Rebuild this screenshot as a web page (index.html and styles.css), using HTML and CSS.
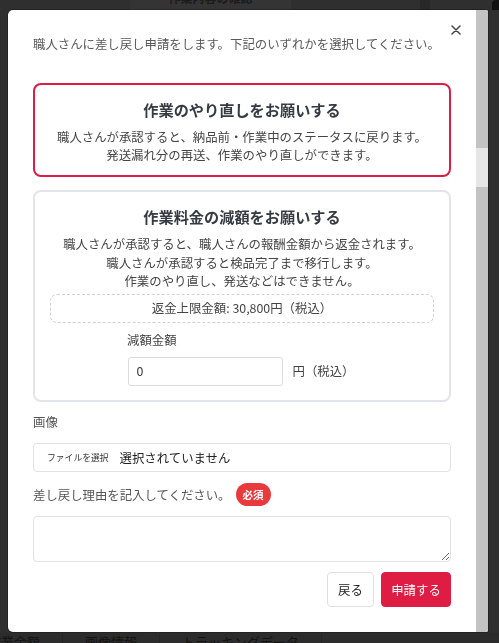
FILE: index.html
```html
<!DOCTYPE html>
<html lang="ja">
<head>
<meta charset="utf-8">
<title>差し戻し申請</title>
<link rel="stylesheet" href="styles.css">
</head>
<body>
<div class="page">
  <div class="page-head">
    <div class="head-gap"></div>
    <div class="head-cell"><span>作業内容の確認</span></div>
    <div class="head-fill"></div>
    <div class="head-bar"></div>
    <div class="head-gap2"></div>
    <div class="head-edge"></div>
  </div>
  <div class="page-tabs">
    <span class="tab tab-first">作業金額</span>
    <span class="tab">画像情報</span>
    <span class="tab">トラッキングデータ</span>
  </div>
</div>

<div class="modal" role="dialog">
  <div class="modal-body">
    <button class="close" type="button" aria-label="閉じる">
      <svg width="10" height="10" viewBox="0 0 10 10"><path d="M1 1L9 9M9 1L1 9" stroke="#444" stroke-width="1.5" stroke-linecap="round"/></svg>
    </button>

    <p class="intro">職人さんに差し戻し申請をします。下記のいずれかを選択してください。</p>

    <div class="option option-active">
      <h3 class="option-title">作業のやり直しをお願いする</h3>
      <p class="option-text text-first">職人さんが承認すると、納品前・作業中のステータスに戻ります。<br>発送漏れ分の再送、作業のやり直しができます。</p>
    </div>

    <div class="option option-reduce">
      <h3 class="option-title">作業料金の減額をお願いする</h3>
      <p class="option-text text-loose">職人さんが承認すると、職人さんの報酬金額から返金されます。<br>職人さんが承認すると検品完了まで移行します。<br>作業のやり直し、発送などはできません。</p>
      <div class="limit">返金上限金額: 30,800円（税込）</div>
      <div class="amount">
        <label class="amount-label" for="amount">減額金額</label>
        <div class="amount-row">
          <input id="amount" class="amount-input" type="text" value="0">
          <span class="amount-unit">円（税込）</span>
        </div>
      </div>
    </div>

    <div class="field-label">画像</div>
    <div class="file-box">
      <span class="file-btn">ファイルを選択</span>
      <span class="file-name">選択されていません</span>
    </div>

    <div class="reason-label">
      <span>差し戻し理由を記入してください。</span>
      <span class="badge">必須</span>
    </div>
    <textarea class="reason"></textarea>

    <div class="actions">
      <button class="btn btn-back" type="button">戻る</button>
      <button class="btn btn-submit" type="button">申請する</button>
    </div>
  </div>
  <div class="scroll">
    <div class="scroll-thumb"></div>
  </div>
</div>
</body>
</html>
```

FILE: styles.css
```css
* {
  box-sizing: border-box;
}

html,
body {
  margin: 0;
  padding: 0;
  height: 100%;
  overflow: hidden;
}

body {
  background: #2f2f2f;
  font-family: "Noto Sans CJK JP", "Noto Sans", sans-serif;
  color: #444;
}

/* dimmed page behind the dialog */
.page {
  height: 643px;
  display: flex;
  flex-direction: column;
}

.page-head {
  display: flex;
  height: 10px;
}

.head-gap {
  width: 130px;
}

.head-cell {
  width: 161px;
  background: #343434;
  overflow: hidden;
  text-align: center;
}

.head-cell span {
  display: block;
  margin-top: -9px;
  font-size: 12px;
  line-height: 14px;
  color: #1c1c1c;
  font-weight: bold;
}

.head-fill {
  flex: 1;
}

.head-bar {
  width: 10px;
  background: #282828;
}

.head-gap2 {
  width: 62px;
}

.head-edge {
  width: 7px;
  background: #111;
  border-radius: 4px 0 0 0;
}

.page-tabs {
  margin-top: auto;
  height: 10px;
  display: flex;
  overflow: hidden;
  background: #2c2c2c;
}

.tab {
  display: block;
  padding: 0 22px;
  font-size: 13px;
  line-height: 16px;
  margin-top: 1px;
  color: #131313;
  border-right: 1px solid #262626;
  white-space: nowrap;
}

.tab-first {
  padding-left: 0;
  margin-left: -12px;
}

/* dialog */
.modal {
  position: fixed;
  left: 8px;
  top: 10px;
  width: 480px;
  height: 622px;
  background: #fff;
  border-radius: 5px 2px 2px 5px;
  display: flex;
  overflow: hidden;
  box-shadow: 0 0 0 1px rgba(0, 0, 0, 0.25);
}

.modal-body {
  position: relative;
  flex: 1;
  padding: 25px 25px 25px;
}

.scroll {
  width: 12px;
  background: #c3c3c3;
}

.scroll-thumb {
  margin-top: 138px;
  height: 39px;
  background: #e6e6e6;
}

.close {
  position: absolute;
  top: 13px;
  right: 13px;
  width: 14px;
  height: 14px;
  padding: 2px;
  border: 0;
  background: transparent;
  display: flex;
  align-items: center;
  justify-content: center;
}

.intro {
  margin: 0;
  font-size: 12.4px;
  line-height: 18px;
  color: #595959;
  white-space: nowrap;
}

.option {
  border: 2px solid #e3e4eb;
  border-radius: 8px;
  padding: 13px 15px 12px;
  text-align: center;
}

.option-active {
  margin-top: 30px;
  height: 94px;
  border-color: #dc1d45;
}

.option-reduce {
  margin-top: 13px;
  height: 212px;
}

.option-title {
  margin: 0;
  font-size: 15.2px;
  line-height: 22px;
  font-weight: bold;
  color: #363a42;
}

.option-text {
  margin: 8px 0 0;
  font-size: 12.4px;
  line-height: 17.5px;
  color: #444;
  white-space: nowrap;
}

.text-first {
  margin-top: 9px;
}

.text-loose {
  line-height: 18.5px;
}

.limit {
  margin-top: 3px;
  height: 29px;
  border: 1px dashed #cfcfd4;
  border-radius: 7px;
  font-size: 12.4px;
  line-height: 27px;
  color: #444;
}

.amount {
  margin-top: 8px;
  display: flex;
  flex-direction: column;
  align-items: center;
}

.amount-label {
  align-self: stretch;
  padding-left: 77px;
  text-align: left;
  font-size: 12.4px;
  line-height: 18px;
  color: #444;
}

.amount-row {
  margin-top: 8px;
  margin-left: -2px;
  display: flex;
  align-items: center;
  gap: 10px;
}

.amount-input {
  width: 155px;
  height: 29px;
  border: 1px solid #dcdcdc;
  border-radius: 3px;
  padding: 0 8px;
  font-family: inherit;
  font-size: 12.4px;
  color: #333;
  outline: none;
}

.amount-unit {
  font-size: 12.4px;
  color: #444;
}

.field-label {
  margin-top: 11px;
  font-size: 12.4px;
  line-height: 18px;
  color: #555;
}

.file-box {
  margin-top: 12px;
  height: 29px;
  border: 1px solid #e2e2e2;
  border-radius: 4px;
  display: flex;
  align-items: center;
  padding-left: 13px;
}

.file-btn {
  font-size: 8.8px;
  color: #333;
}

.file-name {
  margin-left: 11px;
  font-size: 12.4px;
  color: #222;
}

.reason-label {
  margin-top: 11px;
  height: 23px;
  display: flex;
  align-items: center;
  gap: 5px;
  font-size: 12.4px;
  color: #555;
}

.badge {
  width: 35px;
  height: 23px;
  border-radius: 12px;
  background: #e83a3d;
  color: #fff;
  font-size: 10.5px;
  font-weight: bold;
  display: flex;
  align-items: center;
  justify-content: center;
}

.reason {
  display: block;
  margin-top: 10px;
  width: 100%;
  height: 46px;
  border: 1px solid #e2e2e2;
  border-radius: 4px;
  resize: vertical;
  font-family: inherit;
  outline: none;
}

.actions {
  margin-top: 10px;
  display: flex;
  justify-content: flex-end;
  gap: 7px;
}

.btn {
  height: 35px;
  border-radius: 4px;
  font-family: inherit;
  font-size: 12.4px;
  padding: 0;
}

.btn-back {
  width: 47px;
  background: #fff;
  border: 1px solid #e0e0e0;
  color: #222;
}

.btn-submit {
  width: 70px;
  background: #df1c44;
  border: 1px solid #df1c44;
  color: #fff;
}
```
